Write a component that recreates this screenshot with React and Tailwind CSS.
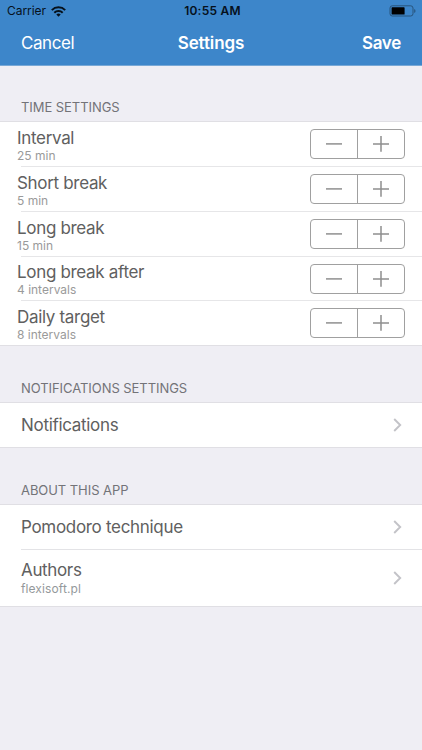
import React from "react";

const timeRows = [
  { title: "Interval", detail: "25 min", height: "h-[45px]" },
  { title: "Short break", detail: "5 min", height: "h-[45px]" },
  { title: "Long break", detail: "15 min", height: "h-[45px]" },
  { title: "Long break after", detail: "4 intervals", height: "h-[44px]" },
  { title: "Daily target", detail: "8 intervals", height: "h-[44px]" },
];

function Chevron() {
  return (
    <svg className="h-[14px] w-[9px] shrink-0" viewBox="0 0 9 14" fill="none" stroke="#c3c3c8" strokeWidth="1.9">
      <path d="M1.2 1 7.2 7l-6 6" />
    </svg>
  );
}

function Stepper() {
  return (
    <div className="grid h-[30px] w-[95px] shrink-0 grid-cols-[47px_46px] rounded-[4px] border border-[#a0a0a0] text-[#8f8f8f]">
      <button className="flex items-center justify-center border-r border-[#a0a0a0]" aria-label="Decrease">
        <svg className="h-4 w-4" viewBox="0 0 16 16" stroke="currentColor" strokeWidth="1.5">
          <path d="M0 7.9h16" />
        </svg>
      </button>
      <button className="flex items-center justify-center" aria-label="Increase">
        <svg className="h-4 w-4" viewBox="0 0 16 16" stroke="currentColor" strokeWidth="1.5">
          <path d="M0 7.9h16M8 0v15.8" />
        </svg>
      </button>
    </div>
  );
}

function Heading({ children, className }) {
  return (
    <h2 className={`flex items-end pl-[21px] text-[13px] leading-4 tracking-[-0.06px] whitespace-nowrap text-[#737378] ${className}`}>
      {children}
    </h2>
  );
}

function StatusBar() {
  return (
    <div className="grid h-[22px] grid-cols-3 items-center pr-[6px] pl-[7px] text-[#06111c]">
      <div className="flex items-center gap-[5px] text-[12px] leading-4">
        <span className="tracking-[-0.05px]">Carrier</span>
        <svg className="h-[11px] w-[15px]" viewBox="0 0 15 11" fill="none" stroke="currentColor" strokeWidth="2">
          <path d="M.8 4.1a9.5 9.5 0 0 1 13.4 0M3.3 6.7a6 6 0 0 1 8.4 0" />
          <path d="M7.5 10.7 5.3 8.5a3.1 3.1 0 0 1 4.4 0Z" fill="currentColor" stroke="none" />
        </svg>
      </div>
      <div className="pl-[2px] text-center text-[12px] leading-4 font-semibold tracking-[0.25px] whitespace-nowrap">10:55 AM</div>
      <svg className="h-3 w-[27px] justify-self-end" viewBox="0 0 27 12">
        <rect x="1" y=".8" width="23" height="10.2" rx="2.3" fill="none" stroke="#28547c" />
        <rect x="2.6" y="2.3" width="13" height="7.2" rx=".6" fill="#000" />
        <path d="M25.2 4v4q1.3-.7 1.3-2t-1.3-2Z" fill="#28547c" />
      </svg>
    </div>
  );
}

export default function App() {
  return (
    <main className="h-[750px] w-[422px] overflow-hidden bg-[#efeef4] font-['Inter',sans-serif] text-[#606060]">
      <header className="h-[66px] border-b border-[#78a8d6] bg-[#3d86ca]">
        <StatusBar />
        <nav className="grid h-[43px] grid-cols-3 items-center px-[21px] text-[17px] text-white">
          <button className="text-left tracking-[-0.45px]">Cancel</button>
          <h1 className="text-center font-semibold tracking-[-0.1px]">Settings</h1>
          <button className="text-right font-semibold tracking-[-0.3px]">Save</button>
        </nav>
      </header>

      <Heading className="h-[49px]">TIME SETTINGS</Heading>
      <section className="mt-[6px] border-y border-[#e0dfe4] bg-white">
        {timeRows.map((row, i) => (
          <div key={row.title} className={`flex flex-col ${row.height}`}>
            <div className="flex min-h-0 flex-1 items-center justify-between pr-[17px] pl-[17px]">
              <div className="pt-1 whitespace-nowrap">
                <div className="text-[17px] leading-[19px] tracking-[-0.32px]">{row.title}</div>
                <div className="text-[12px] leading-4 text-[#9a9a9a]">{row.detail}</div>
              </div>
              <Stepper />
            </div>
            {i < timeRows.length - 1 && <div className="ml-[21px] h-px bg-[#e6e6e8]" />}
          </div>
        ))}
      </section>

      <Heading className="h-[50px]">NOTIFICATIONS SETTINGS</Heading>
      <section className="mt-[6px] flex h-[46px] items-center justify-between border-y border-[#e0dfe4] bg-white pr-5 pl-[21px]">
        <span className="pt-[2px] text-[17px] tracking-[-0.31px]">Notifications</span>
        <Chevron />
      </section>

      <Heading className="h-[50px]">ABOUT THIS APP</Heading>
      <section className="mt-[6px] border-y border-[#e0dfe4] bg-white">
        <div className="flex h-11 items-center justify-between pr-5 pl-[21px]">
          <span className="pt-[2px] text-[17px] tracking-[-0.31px]">Pomodoro technique</span>
          <Chevron />
        </div>
        <div className="ml-[21px] h-px bg-[#e3e3e6]" />
        <div className="flex h-14 items-center justify-between pr-5 pl-[21px]">
          <div className="pt-[2px]">
            <div className="text-[17px] leading-5 tracking-[-0.35px]">Authors</div>
            <div className="text-[12px] leading-[18px] tracking-[0.1px] text-[#94999b]">flexisoft.pl</div>
          </div>
          <Chevron />
        </div>
      </section>
    </main>
  );
}
